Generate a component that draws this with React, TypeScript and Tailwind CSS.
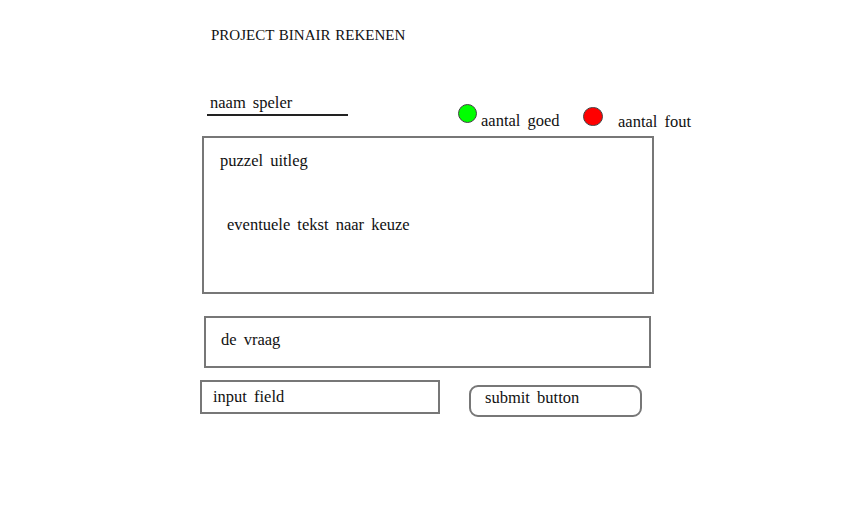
import React from "react";

export default function App() {
  const txt = "text-[16.5px] leading-[18px] text-[#111] [word-spacing:3px] whitespace-nowrap";
  return (
    <div className="w-[847px] h-[532px] bg-white overflow-hidden" style={{ fontFamily: '"Liberation Serif", "DejaVu Serif", serif' }}>
      <div className="pt-[26px] pl-[211px]">
        <div className="text-[15px] leading-[18px] text-[#111] [word-spacing:1px]">PROJECT BINAIR REKENEN</div>
      </div>

      <div className="mt-[50px] flex items-start">
        <div className={`ml-[207px] w-[141px] border-b-2 border-[#222] pl-[3px] pb-[2px] ${txt}`}>naam speler</div>
        <div className="ml-[110px] mt-[10px] w-[19px] h-[19px] rounded-full bg-[#00ff00] border border-[#444]" />
        <div className={`ml-[4px] mt-[18px] w-[79px] ${txt}`}>aantal goed</div>
        <div className="ml-[23px] mt-[13px] w-[20px] h-[19px] rounded-full bg-[#ff0000] border border-[#444]" />
        <div className={`ml-[15px] mt-[19px] ${txt}`}>aantal fout</div>
      </div>

      <div className="mt-[5px] ml-[202px] w-[452px] h-[158px] border-2 border-[#777] pt-[14px] pl-[16px]">
        <div className={txt}>puzzel uitleg</div>
        <div className={`mt-[46px] pl-[7px] ${txt}`}>eventuele tekst naar keuze</div>
      </div>

      <div className="mt-[22px] ml-[204px] w-[447px] h-[52px] border-2 border-[#777] pt-[13px] pl-[15px]">
        <div className={txt}>de vraag</div>
      </div>

      <div className="mt-[12px] flex items-start">
        <div className="ml-[200px] w-[240px] h-[34px] border-2 border-[#777] pt-[6px] pl-[11px]">
          <div className={txt}>input field</div>
        </div>
        <div className="ml-[29px] mt-[5px] w-[173px] h-[32px] rounded-[9px] border-2 border-[#777] pt-[2px] pl-[14px]">
          <div className={txt}>submit button</div>
        </div>
      </div>
    </div>
  );
}
